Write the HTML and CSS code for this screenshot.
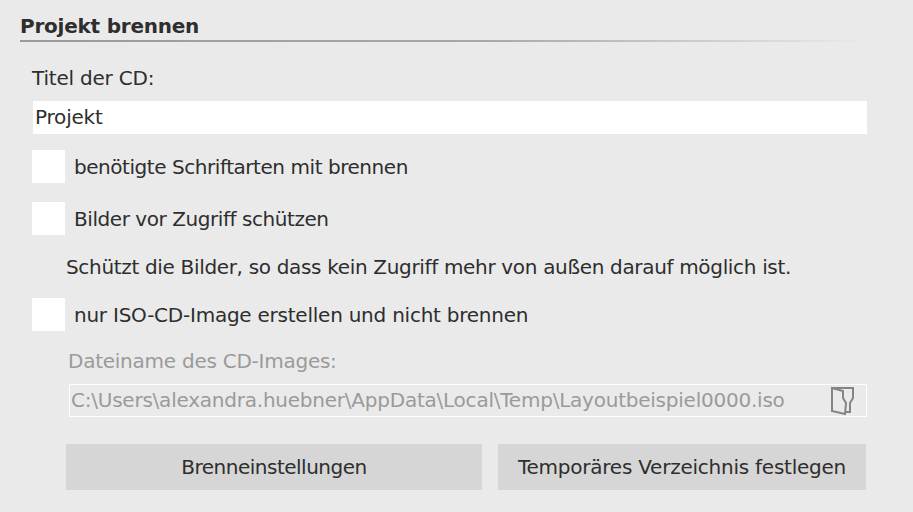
FILE: index.html
```html
<!DOCTYPE html>
<html lang="de">
<head>
<meta charset="utf-8">
<title>Projekt brennen</title>
<link rel="stylesheet" href="styles.css">
</head>
<body>
<main class="panel">
  <h1 class="heading">Projekt brennen</h1>
  <div class="content">
    <label class="title-label">Titel der CD:</label>
    <div class="title-input">Projekt</div>
    <div class="check-row first"><span class="box"></span><span>benötigte Schriftarten mit brennen</span></div>
    <div class="check-row second"><span class="box"></span><span>Bilder vor Zugriff schützen</span></div>
    <p class="hint">Schützt die Bilder, so dass kein Zugriff mehr von außen darauf möglich ist.</p>
    <div class="check-row third"><span class="box"></span><span>nur ISO-CD-Image erstellen und nicht brennen</span></div>
    <div class="iso-label">Dateiname des CD-Images:</div>
    <div class="iso-field">
      <span class="iso-path">C:\Users\alexandra.huebner\AppData\Local\Temp\Layoutbeispiel0000.iso</span>
      <svg class="folder" width="26" height="30" viewBox="0 0 26 30" aria-hidden="true">
        <path d="M2 2H23V12L20 17V26H15 M2 2L13 5V12L16 17L15 28L2 25Z" fill="none" stroke="#858585" stroke-width="2"/>
      </svg>
    </div>
    <div class="buttons">
      <div class="btn btn-a">Brenneinstellungen</div>
      <div class="btn btn-b">Temporäres Verzeichnis festlegen</div>
    </div>
  </div>
</main>
</body>
</html>
```
FILE: styles.css
```css
* { box-sizing: border-box; }
html, body { margin: 0; height: 100%; }
body {
  background: #eaeaea;
  color: #2e2e2e;
  font-family: "DejaVu Sans", sans-serif;
  font-size: 20px;
  letter-spacing: -0.33px;
  line-height: 24px;
  overflow: hidden;
}
.panel { width: 913px; height: 512px; padding: 14px 46px 0 20px; }
.heading {
  margin: 0;
  height: 28px;
  font-size: 20px;
  font-weight: 700;
  line-height: 24px;
  letter-spacing: -0.23px;
  background: linear-gradient(to right, #9a9a9a 0%, #a8a8a8 55%, #eaeaea 100%) left bottom / 100% 2px no-repeat;
}
.content { padding-left: 12px; padding-top: 24px; }
.title-label { display: block; height: 24px; letter-spacing: -0.2px; }
.title-input {
  margin: 11px 0 0 1px;
  height: 33px;
  background: #fff;
  padding: 4px 0 0 2px;
  letter-spacing: -0.2px;
}
.check-row { display: flex; align-items: center; gap: 9px; }
.check-row.first { margin-top: 16px; letter-spacing: -0.45px; }
.check-row.second { margin-top: 19px; letter-spacing: -0.44px; }
.check-row.third { margin-top: 19px; letter-spacing: -0.24px; }
.box { width: 33px; height: 33px; background: #fff; flex: none; }
.hint { margin: 20px 0 0 34px; height: 24px; white-space: nowrap; }
.iso-label { margin: 18px 0 0 36px; height: 24px; color: #9a9a9a; letter-spacing: -0.25px; }
.iso-field {
  margin: 11px 0 0 37px;
  height: 33px;
  width: 798px;
  border: 1px solid #fff;
  color: #9a9a9a;
  padding-left: 1px;
  display: flex;
  align-items: center;
  justify-content: space-between;
}
.iso-path { letter-spacing: -0.23px; margin-bottom: 2px; }
.folder { margin-right: 10px; flex: none; }
.buttons { display: flex; gap: 16px; margin: 27px 0 0 34px; }
.btn {
  height: 46px;
  background: #d6d6d6;
  display: flex;
  align-items: center;
  justify-content: center;
}
.btn-a { width: 416px; letter-spacing: -0.5px; }
.btn-b { width: 368px; letter-spacing: -0.24px; }
```
